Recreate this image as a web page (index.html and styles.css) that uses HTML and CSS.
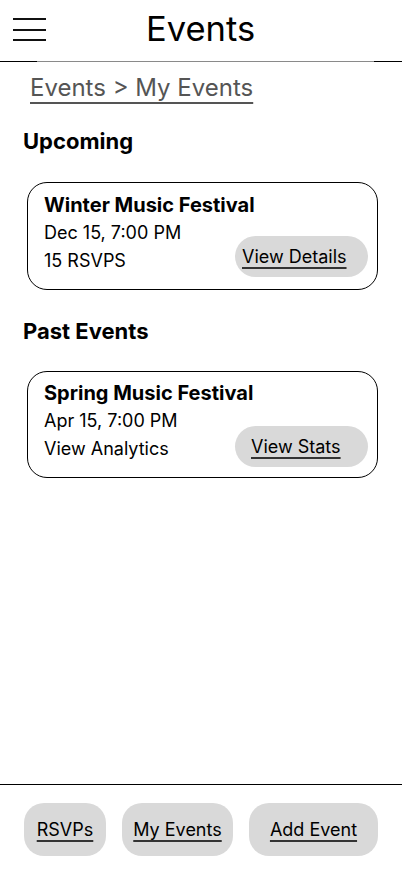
FILE: index.html
```html
<!DOCTYPE html>
<html>
<head>
<meta charset="utf-8">
<link rel="stylesheet" href="styles.css">
</head>
<body>
<div class="screen">
  <header class="topbar">
    <div class="menu">
      <span class="bar"></span><span class="bar"></span><span class="bar"></span>
    </div>
    <h1 class="title">Events</h1>
  </header>
  <div class="rule">
    <span class="rule-dark rule-left"></span><span class="rule-gray"></span><span class="rule-dark rule-right"></span>
  </div>
  <main class="content">
    <a class="crumb">Events &gt; My Events</a>
    <h2 class="section up">Upcoming</h2>
    <div class="card card-up">
      <div class="name">Winter Music Festival</div>
      <div class="line">Dec 15, 7:00 PM</div>
      <div class="line">15 RSVPS</div>
      <a class="pill btn-details">View Details</a>
    </div>
    <h2 class="section past">Past Events</h2>
    <div class="card card-past">
      <div class="name">Spring Music Festival</div>
      <div class="line">Apr 15, 7:00 PM</div>
      <div class="line">View Analytics</div>
      <a class="pill btn-stats">View Stats</a>
    </div>
  </main>
  <nav class="bottombar">
    <a class="tab tab-rsvp">RSVPs</a>
    <a class="tab tab-my">My Events</a>
    <a class="tab tab-add">Add Event</a>
  </nav>
</div>
</body>
</html>
```
FILE: styles.css
```css
* { box-sizing: border-box; margin: 0; padding: 0; }
html, body { background: #fff; }
body {
  font-family: Inter, "Noto Sans", sans-serif;
  color: #000;
}
.screen {
  width: 402px;
  height: 874px;
  display: flex;
  flex-direction: column;
}
.topbar {
  height: 61px;
  display: flex;
  align-items: flex-start;
}
.menu {
  display: flex;
  flex-direction: column;
  gap: 8.5px;
  margin-left: 13px;
  margin-top: 18px;
}
.bar {
  display: block;
  width: 33px;
  height: 2px;
  background: #111;
}
.title {
  font-weight: 400;
  font-size: 34.5px;
  line-height: 42px;
  margin-left: 100px;
  margin-top: 8px;
}
.rule {
  display: flex;
  height: 1px;
}
.rule-dark { background: #000; height: 1px; }
.rule-left { width: 37px; }
.rule-right { width: 28px; }
.rule-gray { flex: 1; background: #8a8a8a; }
.content {
  flex: 1;
  display: flex;
  flex-direction: column;
  padding-left: 23px;
}
.crumb {
  font-size: 24px;
  line-height: 29px;
  color: #555;
  text-decoration: underline;
  text-decoration-thickness: 1.5px;
  text-underline-offset: 6px;
  margin-left: 7px;
  margin-top: 11px;
  align-self: flex-start;
}
.section {
  font-size: 22px;
  line-height: 27px;
  font-weight: 700;
}
.up { margin-top: 26px; }
.past { margin-top: 28px; }
.card {
  width: 351px;
  margin-left: 4px;
  margin-top: 27px;
  border: 1px solid #000;
  border-radius: 20px;
  display: grid;
  grid-template-columns: 1fr 133px;
  grid-template-rows: 27px 28px 28px;
  padding: 9px 9px 0 16px;
}
.card-up { height: 108px; }
.card-past { height: 107px; padding-top: 8px; margin-top: 26px; }
.name {
  grid-column: 1 / -1;
  font-size: 20px;
  font-weight: 700;
  line-height: 27px;
}
.line {
  grid-column: 1;
  font-size: 18px;
  line-height: 28px;
}
.pill {
  grid-column: 2;
  grid-row: 2 / 4;
  align-self: end;
  margin-bottom: -2px;
  background: #d9d9d9;
  border-radius: 21px;
  height: 41px;
  display: flex;
  align-items: center;
  padding-left: 7px;
  font-size: 18px;
  text-decoration: underline;
  text-decoration-thickness: 1.5px;
  text-decoration-color: #333;
  text-underline-offset: 4px;
  color: #000;
}
.card-past .pill { margin-bottom: -4px; }
.btn-stats { padding-left: 16px; }
.bottombar {
  height: 90px;
  border-top: 1px solid #000;
  display: flex;
  align-items: flex-start;
  padding-top: 18px;
  padding-left: 24px;
  gap: 16px;
}
.tab {
  background: #d9d9d9;
  border-radius: 20px;
  height: 53px;
  display: flex;
  align-items: center;
  justify-content: center;
  font-size: 18px;
  text-decoration: underline;
  text-decoration-thickness: 1.5px;
  text-decoration-color: #333;
  text-underline-offset: 4px;
  color: #000;
}
.tab-rsvp { width: 82px; }
.tab-my { width: 111px; }
.tab-add { width: 129px; }
```
